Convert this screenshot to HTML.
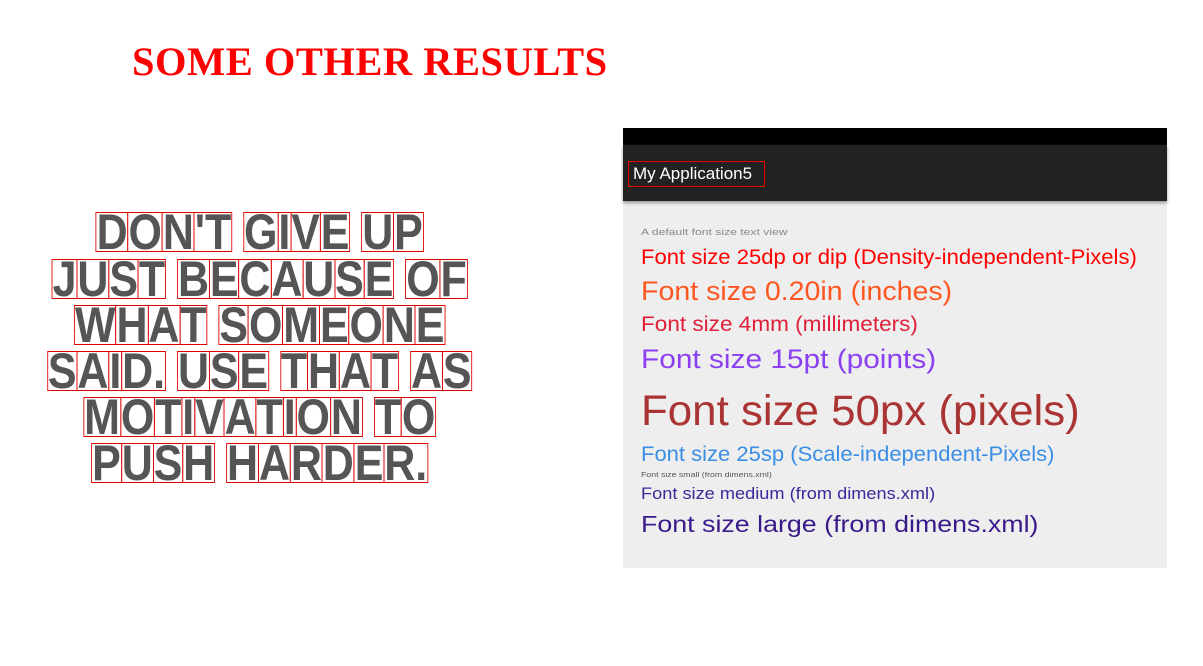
<!DOCTYPE html>
<html><head><meta charset="utf-8"><style>
body{margin:0;width:1203px;height:666px;background:#fff;position:relative;overflow:hidden;font-family:"Liberation Sans",sans-serif}
.t{position:absolute;white-space:nowrap;transform-origin:0 0}
h1{position:absolute;left:132px;top:38px;margin:0;font:bold 40.5px "Liberation Serif",serif;color:#f00;letter-spacing:0.5px}
.q{position:absolute;left:0;width:520px;text-align:center;font-weight:bold;font-size:50px;color:#555;line-height:46px;transform-origin:258px 0;transform:scaleX(0.86)}
.q span{display:inline-block;border:1.5px solid #d00;line-height:38px;margin:0 -0.5px}
.panel{position:absolute;left:623px;top:128px;width:544px;height:440px;background:#eee}
.r{outline:0}
</style></head><body>
<h1>SOME OTHER RESULTS</h1>
<div class="q" style="top:209px"><span>D</span><span>O</span><span>N</span><span>'T</span> <span>G</span><span>I</span><span>V</span><span>E</span> <span>U</span><span>P</span></div>
<div class="q" style="top:256px"><span>J</span><span>U</span><span>S</span><span>T</span> <span>B</span><span>E</span><span>C</span><span>A</span><span>U</span><span>S</span><span>E</span> <span>O</span><span>F</span></div>
<div class="q" style="top:302px"><span>W</span><span>H</span><span>A</span><span>T</span> <span>S</span><span>O</span><span>M</span><span>E</span><span>O</span><span>N</span><span>E</span></div>
<div class="q" style="top:348px"><span>S</span><span>A</span><span>I</span><span>D.</span> <span>U</span><span>S</span><span>E</span> <span>T</span><span>H</span><span>A</span><span>T</span> <span>A</span><span>S</span></div>
<div class="q" style="top:394px"><span>M</span><span>O</span><span>T</span><span>I</span><span>V</span><span>A</span><span>T</span><span>I</span><span>O</span><span>N</span> <span>T</span><span>O</span></div>
<div class="q" style="top:440px"><span>P</span><span>U</span><span>S</span><span>H</span> <span>H</span><span>A</span><span>R</span><span>D</span><span>E</span><span>R.</span></div>
<div class="panel">
<div style="position:absolute;left:0;top:0;width:544px;height:17px;background:#000"></div>
<div style="position:absolute;left:0;top:17px;width:544px;height:56px;background:#222;box-shadow:0 2px 3px #999"></div>
<div class="t" style="left:5px;top:33px;border:1px solid #e00;color:#fff;font-size:17px;padding:2px 4px;line-height:20px;width:127px">My Application5</div>
</div>
<div class="t" style="left:641px;top:227px;font-size:9px;color:#888;transform:scaleX(1.35)">A default font size text view</div>
<div class="t" style="left:641px;top:245px;font-size:21.5px;color:#f00;transform:scaleX(1.027)">Font size 25dp or dip (Density-independent-Pixels)</div>
<div class="t" style="left:641px;top:276px;font-size:27px;color:#ff5722;transform:scaleX(1.058)">Font size 0.20in (inches)</div>
<div class="t" style="left:641px;top:313px;font-size:21px;color:#e0203a;transform:scaleX(1.074)">Font size 4mm (millimeters)</div>
<div class="t" style="left:641px;top:344px;font-size:27px;color:#8a3ff0;transform:scaleX(1.105)">Font size 15pt (points)</div>
<div class="t" style="left:641px;top:387px;font-size:43px;color:#a33;transform:scaleX(1.02)">Font size 50px (pixels)</div>
<div class="t" style="left:641px;top:443px;font-size:21px;color:#3a8ee6;transform:scaleX(1.048)">Font size 25sp (Scale-independent-Pixels)</div>
<div class="t" style="left:641px;top:472px;font-size:7px;color:#555;transform:scaleX(1.25)">Font size small (from dimens.xml)</div>
<div class="t" style="left:641px;top:484px;font-size:17px;color:#3a2a9a;transform:scaleX(1.07)">Font size medium (from dimens.xml)</div>
<div class="t" style="left:641px;top:511px;font-size:23.5px;color:#3a1a8a;transform:scaleX(1.14)">Font size large (from dimens.xml)</div>
</body></html>
